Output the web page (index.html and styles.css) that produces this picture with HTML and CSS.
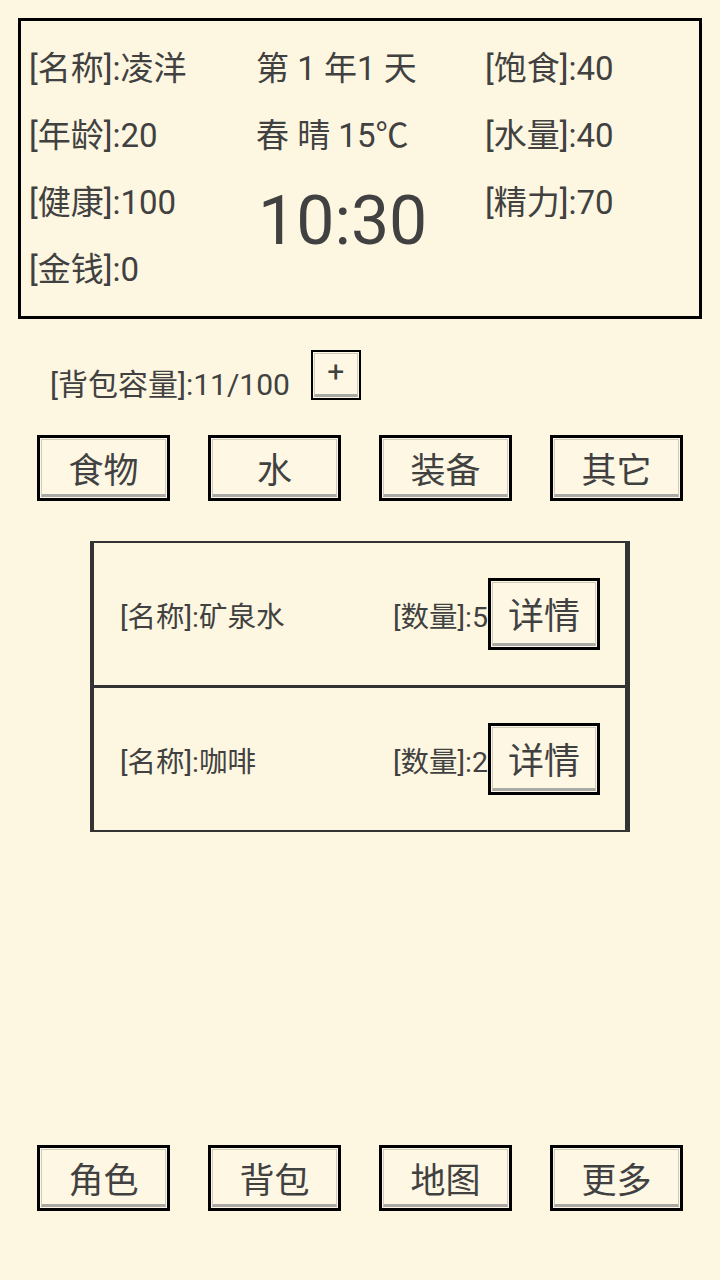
FILE: index.html
```html
<!DOCTYPE html>
<html lang="zh-CN">
<head>
<meta charset="utf-8">
<title>背包</title>
<link rel="stylesheet" href="styles.css">
</head>
<body>
<div class="page">
  <section class="status">
    <div class="col col-a">
      <div class="cell">[名称]:凌洋</div>
      <div class="cell">[年龄]:20</div>
      <div class="cell">[健康]:100</div>
      <div class="cell">[金钱]:0</div>
    </div>
    <div class="col col-b">
      <div class="cell">第 1 年1 天</div>
      <div class="cell">春 晴 15℃</div>
      <div class="clock">10:30</div>
    </div>
    <div class="col col-c">
      <div class="cell">[饱食]:40</div>
      <div class="cell">[水量]:40</div>
      <div class="cell">[精力]:70</div>
    </div>
  </section>

  <div class="capacity">
    <span class="capacity-text">[背包容量]:11/100</span>
    <button class="btn btn-plus"><span class="btn-in">+</span></button>
  </div>

  <nav class="btn-row tabs">
    <button class="btn btn-big"><span class="btn-in">食物</span></button>
    <button class="btn btn-big"><span class="btn-in">水</span></button>
    <button class="btn btn-big"><span class="btn-in">装备</span></button>
    <button class="btn btn-big"><span class="btn-in">其它</span></button>
  </nav>

  <section class="list">
    <div class="item">
      <span class="item-name">[名称]:矿泉水</span>
      <span class="item-qty">[数量]:5</span>
      <button class="btn btn-detail"><span class="btn-in">详情</span></button>
    </div>
    <div class="item">
      <span class="item-name">[名称]:咖啡</span>
      <span class="item-qty">[数量]:2</span>
      <button class="btn btn-detail"><span class="btn-in">详情</span></button>
    </div>
  </section>

  <nav class="btn-row bottom-nav">
    <button class="btn btn-big"><span class="btn-in">角色</span></button>
    <button class="btn btn-big"><span class="btn-in">背包</span></button>
    <button class="btn btn-big"><span class="btn-in">地图</span></button>
    <button class="btn btn-big"><span class="btn-in">更多</span></button>
  </nav>
</div>
</body>
</html>
```

FILE: styles.css
```css
html, body {
  margin: 0;
  padding: 0;
  background: #fdf6e0;
}

body {
  font-family: Roboto, "Noto Sans CJK SC", sans-serif;
  color: #414141;
}

.page {
  display: flex;
  flex-direction: column;
  min-height: 1280px;
  box-sizing: border-box;
}

/* ---------- status panel ---------- */
.status {
  margin: 18px 18px 0;
  height: 301px;
  box-sizing: border-box;
  border: 3px solid #000;
  padding: 14px 0 0 8px;
  display: grid;
  grid-template-columns: 227px 229px 1fr;
}

.col {
  display: flex;
  flex-direction: column;
}

.cell {
  height: 67px;
  line-height: 67px;
  font-size: 33px;
  white-space: nowrap;
}

.clock {
  margin-top: 12px;
  margin-left: 2px;
  font-size: 68px;
  line-height: 80px;
  white-space: nowrap;
}

/* ---------- capacity ---------- */
.capacity {
  display: flex;
  align-items: flex-start;
  margin-top: 31px;
  padding-left: 50px;
  gap: 21px;
}

.capacity-text {
  margin-top: 18px;
  font-size: 30px;
  line-height: 34px;
  white-space: nowrap;
}

/* ---------- buttons ---------- */
.btn {
  display: block;
  box-sizing: border-box;
  margin: 0;
  padding: 1px;
  border: 3px solid #000;
  background: #fdf7e4;
  font-family: inherit;
  color: #414141;
  cursor: pointer;
}

.btn-in {
  display: flex;
  align-items: center;
  justify-content: center;
  box-sizing: border-box;
  height: 100%;
  border: 1px solid #cfcabb;
  border-bottom: 3px solid #a9a9a6;
  white-space: nowrap;
}

.btn-plus {
  width: 50px;
  height: 50px;
  border-width: 2px;
  font-size: 30px;
}

.btn-plus .btn-in {
  padding-bottom: 6px;
}

.btn-row {
  display: flex;
  justify-content: center;
  gap: 38px;
}

.btn-big {
  width: 133px;
  height: 66px;
  font-size: 35px;
}

.tabs {
  margin-top: 33px;
}

.bottom-nav {
  margin-top: auto;
  margin-bottom: 69px;
}

/* ---------- item list ---------- */
.list {
  margin: 40px 0 0 90px;
  width: 540px;
  box-sizing: border-box;
  border-left: 4px solid #333;
  border-right: 5px solid #333;
  border-top: 2px solid #333;
  border-bottom: 2px solid #333;
}

.item {
  display: flex;
  align-items: center;
  height: 142px;
  padding: 0 25px 0 26px;
}

.item + .item {
  border-top: 3px solid #333;
}

.item-name {
  flex: 1;
  font-size: 28.5px;
  white-space: nowrap;
}

.item-qty {
  font-size: 28.5px;
  white-space: nowrap;
}

.btn-detail {
  width: 112px;
  height: 72px;
  font-size: 36px;
}
```
